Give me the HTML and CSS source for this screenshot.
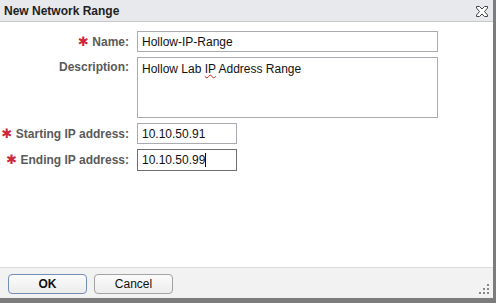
FILE: index.html
```html
<!DOCTYPE html>
<html lang="en">
<head>
    <meta charset="UTF-8">
    <title>New Network Range</title>
    <link rel="stylesheet" href="styles.css">
</head>
<body>
    <div class="dialog">
        <div class="titlebar">
            <span class="title">New Network Range</span>
            <svg class="close" width="12" height="11" viewBox="0 0 12 11">
                <path d="M0.5 0.5h3l2.5 2.5 2.5-2.5h3v1.5l-3 3.5 3 3.5v1.5h-3l-2.5-2.5-2.5 2.5h-3v-1.5l3-3.5-3-3.5z" fill="#fff" stroke="#444" stroke-width="1"/>
            </svg>
        </div>

        <div class="content">
            <div class="form">
                <label class="req"><span class="star">✱</span> Name:</label>
                <div class="field wide">Hollow-IP-Range</div>

                <label class="top">Description:</label>
                <div class="field wide area">Hollow Lab <span class="typo">IP</span> Address Range</div>

                <label class="req"><span class="star">✱</span> Starting IP address:</label>
                <div class="field short">10.10.50.91</div>

                <label class="req"><span class="star">✱</span> Ending IP address:</label>
                <div class="field short focus">10.10.50.99<span class="caret"></span></div>
            </div>
        </div>

        <div class="footer">
            <button class="btn primary">OK</button>
            <button class="btn">Cancel</button>
            <svg class="grip" width="11" height="11" viewBox="0 0 11 11">
                <rect x="8" y="0" width="2" height="2" fill="#888"/>
                <rect x="4" y="4" width="2" height="2" fill="#888"/>
                <rect x="8" y="4" width="2" height="2" fill="#888"/>
                <rect x="0" y="8" width="2" height="2" fill="#888"/>
                <rect x="4" y="8" width="2" height="2" fill="#888"/>
                <rect x="8" y="8" width="2" height="2" fill="#888"/>
            </svg>
        </div>
    </div>
</body>
</html>
```

FILE: styles.css
```css
body {
    margin: 0;
    background: #7c7c7c;
    font-family: "Liberation Sans", Arial, sans-serif;
    font-size: 12px;
}
.dialog {
    width: 493px;
    height: 298px;
    background: #ffffff;
    display: flex;
    flex-direction: column;
}
.titlebar {
    height: 21px;
    background: #e7e9ec;
    border-bottom: 1px solid #c9c9c9;
    display: flex;
    align-items: center;
    justify-content: space-between;
    padding: 0 5px 0 4px;
}
.title {
    font-weight: bold;
    color: #1e1e1e;
}
.close {
    display: block;
    margin-top: 1px;
}
.content {
    flex: 1;
    padding: 9px 0 0 0;
}
.form {
    display: grid;
    grid-template-columns: 129px auto;
    column-gap: 8px;
    row-gap: 5px;
    align-items: center;
}
label {
    text-align: right;
    font-weight: bold;
    color: #5a5a5a;
}
label.top {
    align-self: start;
    padding-top: 3px;
}
.star {
    font-family: "DejaVu Sans", sans-serif;
    color: #d0263a;
    font-size: 13px;
    line-height: 10px;
}
.field {
    box-sizing: border-box;
    height: 21px;
    border: 1px solid #a9abb0;
    padding: 3px 4px 0 4px;
    color: #111;
}
.wide {
    width: 301px;
}
.short {
    width: 100px;
}
.area {
    height: 61px;
    padding-top: 4px;
}
.focus {
    border-color: #6f6f6f;
    height: 22px;
}
.typo {
    text-decoration: underline wavy #d02020;
    text-decoration-thickness: 1px;
}
.caret {
    display: inline-block;
    width: 1px;
    height: 14px;
    background: #000;
    vertical-align: -3px;
}
.footer {
    height: 31px;
    box-sizing: border-box;
    background: #f2f2f2;
    border-top: 1px solid #dcdcdc;
    padding: 6px 0 0 8px;
    display: flex;
    align-items: flex-start;
    gap: 7px;
    position: relative;
}
.btn {
    width: 79px;
    height: 20px;
    border: 1px solid #a3a3a3;
    border-radius: 4px;
    background: linear-gradient(#fbfbfb, #ececec);
    font-family: "Liberation Sans", Arial, sans-serif;
    font-size: 12px;
    color: #111;
    padding: 0;
}
.btn.primary {
    border-color: #6f8fb4;
    font-weight: bold;
}
.grip {
    position: absolute;
    right: 3px;
    bottom: 3px;
}
```
